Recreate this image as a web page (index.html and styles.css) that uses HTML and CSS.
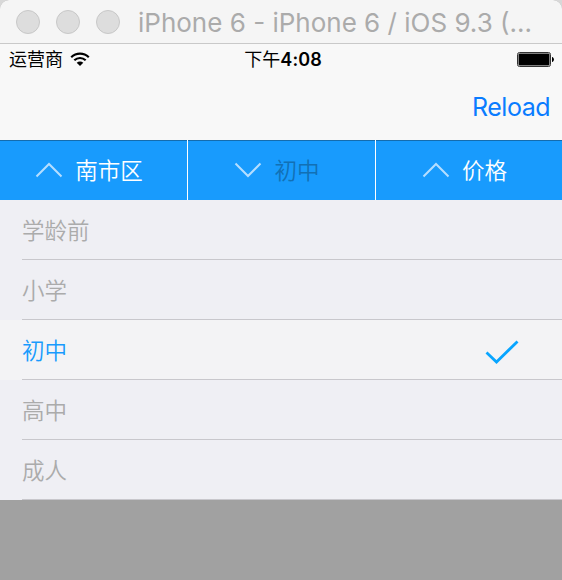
FILE: index.html
```html
<!DOCTYPE html>
<html lang="zh-CN">
<head>
<meta charset="utf-8">
<title>iPhone 6</title>
<link rel="stylesheet" href="styles.css">
</head>
<body>
<div class="window">
  <header class="titlebar">
    <span class="light"></span><span class="light"></span><span class="light"></span>
    <span class="title">iPhone 6 - iPhone 6 / iOS 9.3 (...</span>
  </header>
  <div class="statusbar">
    <div class="carrier">
      <span>运营商</span>
      <svg class="wifi" width="20" height="15" viewBox="0 0 20 15">
        <path d="M1.2 5.2C6.2 .4 13.8 .4 18.8 5.2M4.3 8.3C7.6 5.2 12.4 5.2 15.7 8.3" fill="none" stroke="#000" stroke-width="2.2"/>
        <path d="M10 14L6.7 10.7C8.5 9.1 11.5 9.1 13.3 10.7Z"/>
      </svg>
    </div>
    <div class="clock">下午<b>4:08</b></div>
    <svg class="battery" width="38" height="16" viewBox="0 0 38 16">
      <rect x=".5" y=".5" width="33" height="14" rx="2" fill="#fff" stroke="#333"/>
      <rect x="1.5" y="1.5" width="31" height="12" rx="1"/>
      <path d="M35 5C37.6 5.5 37.6 9.5 35 10Z"/>
    </svg>
  </div>
  <nav class="navbar"><a class="reload">Reload</a></nav>
  <div class="tabs">
    <div class="tab"><svg class="chevron" width="28" height="16" viewBox="0 0 28 16"><path d="M1.5 14.5L14 2L26.5 14.5"/></svg><span>南市区</span></div>
    <div class="tab active"><svg class="chevron" width="28" height="16" viewBox="0 0 28 16"><path d="M1.5 1.5L14 14L26.5 1.5"/></svg><span>初中</span></div>
    <div class="tab"><svg class="chevron" width="28" height="16" viewBox="0 0 28 16"><path d="M1.5 14.5L14 2L26.5 14.5"/></svg><span>价格</span></div>
  </div>
  <ul class="list">
    <li class="row"><div class="cell"><span>学龄前</span></div></li>
    <li class="row"><div class="cell"><span>小学</span></div></li>
    <li class="row selected"><div class="cell"><span>初中</span><svg class="check" width="34" height="24" viewBox="0 0 34 24"><path d="M1.5 12.5L11.5 22L32.5 1.5"/></svg></div></li>
    <li class="row"><div class="cell"><span>高中</span></div></li>
    <li class="row"><div class="cell"><span>成人</span></div></li>
  </ul>
</div>
</body>
</html>
```
FILE: styles.css
```css
* { box-sizing: border-box; }
body {
  margin: 0;
  background: #d8d8d8;
  font-family: Inter, "Noto Sans CJK SC", sans-serif;
}
.window {
  width: 562px;
  height: 580px;
  background: #a1a1a1;
  border-radius: 9px 9px 0 0;
  overflow: hidden;
}
.titlebar {
  height: 44px;
  display: flex;
  align-items: center;
  gap: 16px;
  padding-left: 16px;
  background: #f5f5f5;
  border-bottom: 1px solid #c9c9c9;
}
.light {
  flex: none;
  width: 24px;
  height: 24px;
  border-radius: 50%;
  background: #dddddd;
  border: 1px solid #c8c8c8;
}
.title {
  margin-left: 2px;
  padding-top: 2px;
  font-size: 26px;
  line-height: 40px;
  color: #ababab;
  white-space: nowrap;
}
.statusbar {
  height: 31px;
  display: grid;
  grid-template-columns: 1fr auto 1fr;
  align-items: center;
  padding: 0 7px 0 9px;
  background: #f8f8f8;
  font-size: 18px;
  line-height: 30px;
  color: #000;
}
.carrier { display: flex; align-items: center; gap: 7px; }
.clock { padding-left: 2px; letter-spacing: 0.1px; }
.clock b { font-weight: 600; }
.battery { justify-self: end; }
.navbar {
  height: 65px;
  display: flex;
  justify-content: flex-end;
  align-items: center;
  padding-right: 12px;
  background: #f8f8f8;
}
.reload {
  padding-bottom: 1px;
  font-size: 25px;
  line-height: 30px;
  letter-spacing: -0.5px;
  color: #0a7cff;
}
.tabs {
  height: 60px;
  display: grid;
  grid-template-columns: 188px 188px 1fr;
  background: #189bfd;
  box-shadow: inset 0 1px #146cae;
}
.tab {
  display: flex;
  align-items: center;
  justify-content: center;
  gap: 12px;
  padding-right: 9px;
  border-right: 1px solid #fff;
  font-size: 22.5px;
  font-weight: 350;
  color: #fff;
}
.tab span, .cell span { padding-bottom: 2px; }
.tab:last-child { border-right: 0; }
.active { color: #1270b5; }
.chevron path { fill: none; stroke: #b5deff; stroke-width: 2; }
.list { margin: 0; padding: 0; list-style: none; }
.row {
  height: 60px;
  padding-left: 22px;
  background: #efeff4;
  color: #ababab;
}
.cell {
  height: 60px;
  display: flex;
  align-items: center;
  justify-content: space-between;
  padding-right: 43px;
  border-bottom: 1px solid #c8c7cc;
  font-size: 22.5px;
  font-weight: 350;
}
.selected { background: #f3f3f5; color: #189bfd; }
.check { margin-top: 5px; }
.check path { fill: none; stroke: #08a5ff; stroke-width: 2.8; }
```
